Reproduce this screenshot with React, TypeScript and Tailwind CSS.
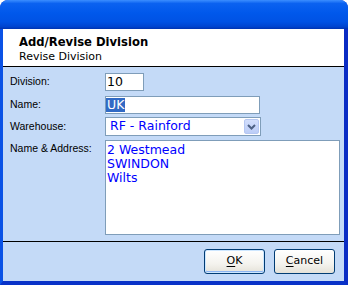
export default function App() {
  return (
    <div className="w-[348px] h-[285px] flex flex-col rounded-t-[8px] overflow-hidden bg-[#0A3ED0] font-['DejaVu_Sans',sans-serif]">
      {/* title bar */}
      <div className="h-[29px] shrink-0 bg-[linear-gradient(180deg,#3B8EFF_0%,#0B62F0_12%,#0058EB_45%,#0052E4_75%,#0044CF_92%,#0033B0_100%)]" />

      {/* client area */}
      <div className="flex-1 flex flex-col border-l-[3px] border-l-[#0A52E6] border-r-[4px] border-r-[#0A2CC4] border-b-[4px] border-b-[#0832C8]">
        {/* header */}
        <div className="h-[37px] bg-white pl-[16px] pt-[6px] text-black text-[11px]">
          <div className="font-bold text-[11.6px] leading-[14px]">Add/Revise Division</div>
          <div className="leading-[13px] mt-[1px]">Revise Division</div>
        </div>
        <div className="h-px bg-black" />

        {/* form */}
        <div className="h-[174px] bg-[#C4DAF7] pl-[7px] pr-[4px] pt-[6px] flex flex-col font-['Liberation_Sans',sans-serif] text-[10.5px] text-black">
          <div className="flex items-center h-[18px]">
            <div className="w-[95px]">Division:</div>
            <div className="w-[39px] h-[18px] border border-[#7F9DB9] bg-white flex items-center pl-[1px] font-['DejaVu_Sans',sans-serif] text-[12.5px] text-black">
              10
            </div>
          </div>
          <div className="flex items-center h-[18px] mt-[5px]">
            <div className="w-[95px]">Name:</div>
            <div className="w-[155px] h-[18px] border border-[#7F9DB9] bg-white flex items-center font-['DejaVu_Sans',sans-serif] text-[12.5px]">
              <span className="bg-[#316AC5] text-white px-[1px] leading-[14px]">UK</span>
            </div>
          </div>
          <div className="flex items-center h-[19px] mt-[3px]">
            <div className="w-[95px]">Warehouse:</div>
            <div className="w-[156px] h-[19px] border border-[#7F9DB9] bg-white flex items-center pl-[4px] pr-[1px] font-['DejaVu_Sans',sans-serif] text-[12.5px] text-[#0000FF]">
              <span className="flex-1">RF - Rainford</span>
              <div className="w-[15px] h-[15px] rounded-[2px] bg-[linear-gradient(180deg,#D2DEFC_0%,#BCCDF7_100%)] border border-[#B5C7F2] flex items-center justify-center">
                <svg width="9" height="6" viewBox="0 0 9 6">
                  <polyline points="1,1 4.5,4.5 8,1" fill="none" stroke="#4D6185" strokeWidth="2" />
                </svg>
              </div>
            </div>
          </div>
          <div className="flex items-start h-[95px] mt-[4px]">
            <div className="w-[95px] pt-[1px]">Name &amp; Address:</div>
            <div className="w-[235px] h-[95px] border border-[#7F9DB9] bg-white pl-[1px] pt-[2px] font-['DejaVu_Sans',sans-serif] text-[12.5px] leading-[14px] text-[#0000FF]">
              <div>2 Westmead</div>
              <div>SWINDON</div>
              <div>Wilts</div>
            </div>
          </div>
        </div>
        <div className="h-px bg-black" />

        {/* footer */}
        <div className="flex-1 bg-[#C4DAF7] flex justify-end items-start pt-[7px] pr-[9px] gap-[9px] text-[11px] text-black">
          <button className="w-[61px] h-[25px] rounded-[3px] border border-[#003C74] bg-[linear-gradient(180deg,#FFFFFF_0%,#F4F3EE_60%,#E4E1D8_100%)] shadow-[inset_0_0_0_1px_#CEE7FF,inset_0_-1px_0_1px_#8CB4F2]">
            <span className="underline underline-offset-2">O</span>K
          </button>
          <button className="w-[61px] h-[25px] rounded-[3px] border border-[#003C74] bg-[linear-gradient(180deg,#FFFFFF_0%,#F4F3EE_60%,#E4E1D8_100%)]">
            <span className="underline underline-offset-2">C</span>ancel
          </button>
        </div>
      </div>
    </div>
  );
}
